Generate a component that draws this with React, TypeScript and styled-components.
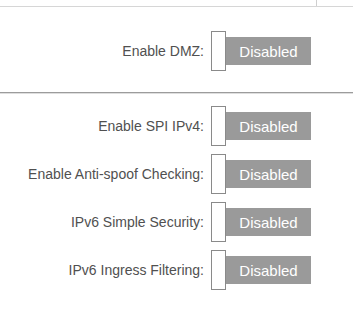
import React from "react";
import styled, { createGlobalStyle } from "styled-components";

const Global = createGlobalStyle`
  html, body { margin: 0; padding: 0; background: #ffffff; }
  body { font-family: "Liberation Sans", Arial, sans-serif; }
`;

const Page = styled.div`
  width: 353px;
  height: 333px;
  background: #fff;
  overflow: hidden;
`;

const TopBar = styled.div`
  height: 6px;
  border-bottom: 1px solid #d6d6d6;
  display: flex;
  justify-content: flex-end;
`;

const TopTab = styled.div`
  width: 36px;
  border-left: 1px solid #cfcfcf;
`;

const Section = styled.div<{ $top: number; $bottom: number; $divider?: boolean }>`
  padding: ${(p) => p.$top}px 42px ${(p) => p.$bottom}px 0;
  display: grid;
  grid-template-columns: 1fr auto;
  row-gap: 8px;
  align-items: center;
  ${(p) => (p.$divider ? "border-bottom: 1px solid #9c9c9c; box-shadow: 0 1px 0 #dedede;" : "")}
`;

const Label = styled.div`
  text-align: right;
  padding-right: 7px;
  font-size: 14px;
  color: #505050;
  white-space: nowrap;
`;

const Toggle = styled.div`
  display: flex;
  align-items: center;
  height: 40px;
`;

const Knob = styled.div`
  box-sizing: border-box;
  width: 15px;
  height: 40px;
  background: #ffffff;
  border: 1px solid #8a8a8a;
`;

const Bar = styled.div`
  width: 85px;
  height: 28px;
  background: #9a9a9a;
  color: #ffffff;
  font-size: 15px;
  display: flex;
  align-items: center;
  justify-content: center;
`;

const Row = ({ label }: { label: string }) => (
  <>
    <Label>{label}</Label>
    <Toggle>
      <Knob />
      <Bar>Disabled</Bar>
    </Toggle>
  </>
);

export default function App() {
  return (
    <Page>
      <Global />
      <TopBar>
        <TopTab />
      </TopBar>
      <Section $top={24} $bottom={21} $divider>
        <Row label="Enable DMZ:" />
      </Section>
      <Section $top={13} $bottom={0}>
        <Row label="Enable SPI IPv4:" />
        <Row label="Enable Anti-spoof Checking:" />
        <Row label="IPv6 Simple Security:" />
        <Row label="IPv6 Ingress Filtering:" />
      </Section>
    </Page>
  );
}
